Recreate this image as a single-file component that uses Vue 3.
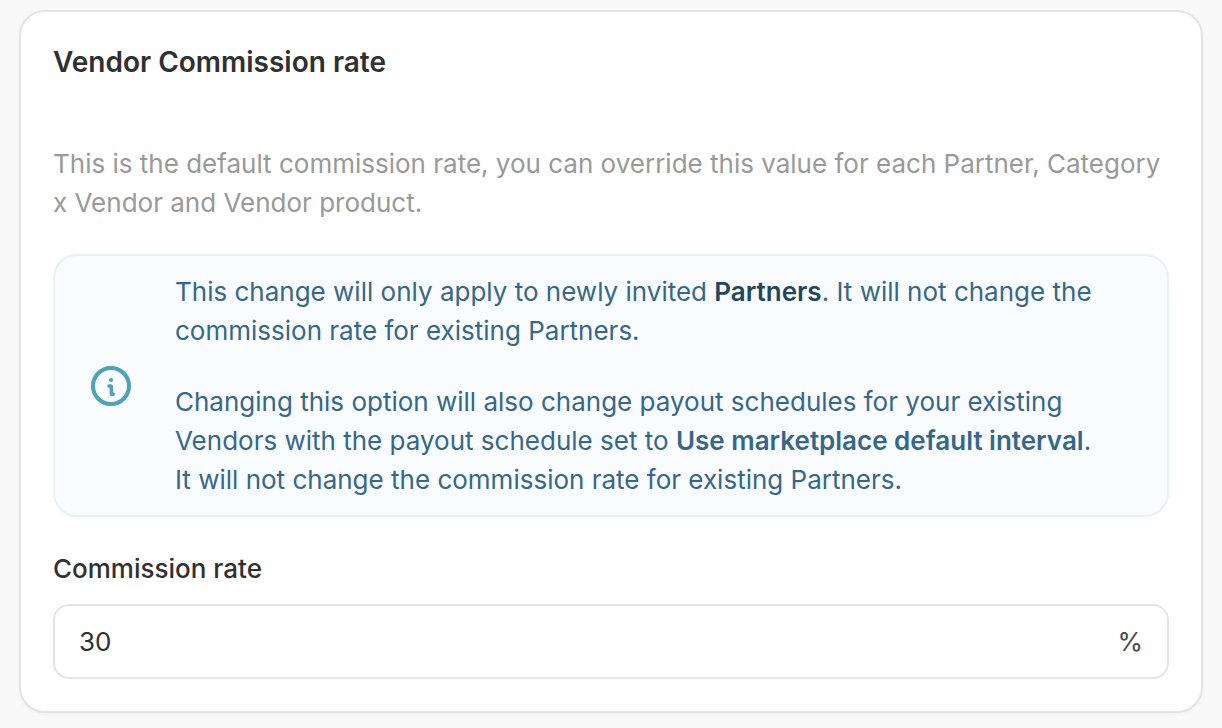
<script setup>
import { ref } from 'vue'

const rate = ref('30')
</script>

<template>
  <main class="page">
    <section class="card">
      <h2 class="title">Vendor Commission rate</h2>
      <p class="description">
        This is the default commission rate, you can override this value for each Partner, Category x Vendor and Vendor product.
      </p>
      <div class="notice">
        <svg class="icon" viewBox="0 0 40 40" aria-hidden="true">
          <circle cx="20" cy="20" r="18" fill="none" stroke="#4da1b8" stroke-width="4" />
          <circle cx="20" cy="14" r="2.1" fill="#4da1b8" />
          <path d="M18 19.9H19.6Q20.4 19.9 20.4 20.8V28.2H22.2" fill="none" stroke="#4da1b8" stroke-width="3.5" stroke-linecap="round" stroke-linejoin="round" />
        </svg>
        <div class="notice-text">
          <p>This change will only apply to newly invited <strong class="dark">Partners</strong>. It will not change the commission rate for existing Partners.</p>
          <p>Changing this option will also change payout schedules for your existing Vendors with the payout schedule set to <strong>Use marketplace default interval</strong>. It will not change the commission rate for existing Partners.</p>
        </div>
      </div>
      <label class="label" for="rate">Commission rate</label>
      <div class="field">
        <input id="rate" v-model="rate" type="text" inputmode="decimal" />
        <span class="unit">%</span>
      </div>
    </section>
  </main>
</template>

<style>
body {
  background: #f9f9f9;
}
</style>

<style scoped>
.page {
  padding: 10px 19px 15px;
  font-family: Inter, "Liberation Sans", sans-serif;
  font-size: 26px;
  line-height: 39px;
}
.card {
  box-sizing: border-box;
  padding: 30px 32px 32px;
  border: 2px solid #e4e4e4;
  border-radius: 26px;
  background: #fff;
  box-shadow: 0 2px 4px rgba(0, 0, 0, 0.03);
}
.title {
  margin: 0;
  font-size: 28px;
  line-height: 40px;
  font-weight: 600;
  color: #303030;
}
.description {
  margin: 62px 0 32px;
  color: #999;
}
.notice {
  display: flex;
  align-items: center;
  gap: 44px;
  padding: 16px 64px 16px 36px;
  border: 2px solid #e5f2f6;
  border-radius: 24px;
  background: #f8fcff;
  color: #376788;
}
.icon {
  flex: none;
  width: 40px;
  height: 40px;
}
.notice-text p {
  margin: 0;
}
.notice-text p + p {
  margin-top: 32px;
}
strong {
  font-weight: 600;
}
.dark {
  color: #24465c;
}
.label {
  display: block;
  margin: 32px 0 16px;
  font-weight: 500;
  color: #303030;
}
.field {
  display: flex;
  align-items: center;
  padding: 0 24px;
  border: 2px solid #e4e4e4;
  border-radius: 16px;
  background: #fff;
  color: #303030;
}
input {
  flex: 1;
  min-width: 0;
  height: 71px;
  padding: 0;
  border: 0;
  outline: 0;
  background: transparent;
  color: inherit;
  font: inherit;
}
.unit {
  color: #4a4a4a;
}
</style>
